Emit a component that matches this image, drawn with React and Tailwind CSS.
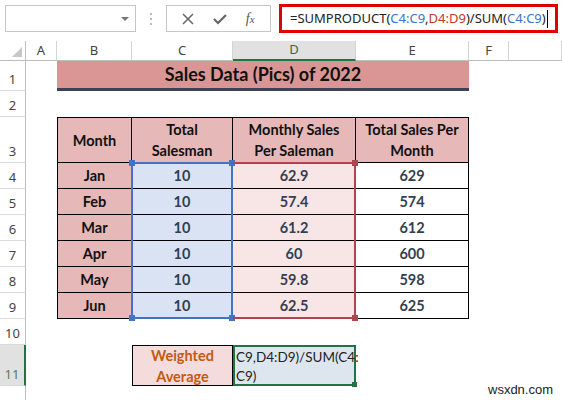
import React from 'react';

const rows = [
  ['Jan', '10', '62.9', '629'],
  ['Feb', '10', '57.4', '574'],
  ['Mar', '10', '61.2', '612'],
  ['Apr', '10', '60', '600'],
  ['May', '10', '59.8', '598'],
  ['Jun', '10', '62.5', '625'],
];

// explicit grid rows for sheet rows 4..9
const rowStart = ['row-start-5', 'row-start-6', 'row-start-7', 'row-start-8', 'row-start-9', 'row-start-10'];

const cellFont = { fontFamily: 'Lato, "Open Sans", sans-serif' };
const uiFont = { fontFamily: '"Noto Sans", sans-serif' };

function RowHead({ n, row, active }) {
  return (
    <div
      className={`col-start-1 ${row} flex items-end justify-center pb-[1px] text-[13px] border-b border-[#dadada] ${
        active ? 'bg-[#e1e1e1] text-[#5a7a5e] border-r-2 border-r-[#217346]' : 'text-[#444] border-r border-r-[#bdbdbd]'
      }`}
      style={uiFont}
    >
      {n}
    </div>
  );
}

function ColHead({ label, active }) {
  return (
    <div
      className={`row-start-1 flex items-center justify-center text-[13px] border-r border-[#d4d4d4] ${
        active ? 'bg-[#e1e1e1] text-[#217346] border-b-2 border-b-[#217346]' : 'text-[#444] border-b border-b-[#bdbdbd]'
      }`}
      style={uiFont}
    >
      {label}
    </div>
  );
}

function Handle({ pos, color }) {
  return <div className={`absolute w-[6px] h-[6px] ${pos} ${color}`} />;
}

export default function App() {
  return (
    <div className="w-[562px] h-[400px] overflow-hidden bg-white relative">
      {/* Formula bar */}
      <div className="h-[41px] flex items-start pt-[5px] pl-[5px]">
        <div className="w-[131px] h-[27px] border border-[#c6c6c6] flex items-center justify-end pr-[6px]">
          <div className="w-0 h-0 border-l-[4px] border-r-[4px] border-t-[4px] border-l-transparent border-r-transparent border-t-[#777]" />
        </div>
        <div className="w-[30px] h-[27px] flex flex-col items-center justify-center gap-[3px]">
          <span className="w-[2px] h-[2px] bg-[#bbb]" />
          <span className="w-[2px] h-[2px] bg-[#bbb]" />
          <span className="w-[2px] h-[2px] bg-[#bbb]" />
        </div>
        <div className="w-[105px] h-[27px] border border-[#c6c6c6] flex items-center justify-around px-[6px]">
          <svg width="12" height="12" viewBox="0 0 12 12">
            <path d="M1 1 L11 11 M11 1 L1 11" stroke="#666" strokeWidth="1.5" />
          </svg>
          <svg width="14" height="12" viewBox="0 0 14 12">
            <path d="M1 6 L5 10 L13 2" stroke="#666" strokeWidth="2.2" fill="none" />
          </svg>
          <span className="italic text-[14px] text-[#555]" style={{ fontFamily: '"Liberation Serif", serif' }}>
            f<span className="text-[11px]">x</span>
          </span>
        </div>
        <div
          className="ml-[8px] w-[279px] h-[29px] -mt-[1px] border-[3px] border-[#e00000] flex items-center pl-[8px] text-[13px] text-[#222] whitespace-nowrap"
          style={uiFont}
        >
          <span>=SUMPRODUCT(</span>
          <span className="text-[#3b73c8]">C4:C9</span>
          <span>,</span>
          <span className="text-[#c0392b]">D4:D9</span>
          <span>)/SUM(</span>
          <span className="text-[#3b73c8]">C4:C9</span>
          <span>)</span>
          <span className="w-[1px] h-[18px] bg-black ml-[1px]" />
        </div>
      </div>

      {/* Sheet grid */}
      <div className="grid grid-cols-[26px_31px_75px_101px_123px_113px_40px_1fr] grid-rows-[20px_30px_26px_46px_26px_26px_26px_26px_26px_26px_26px_41px_20px]">
        {/* corner + column headers */}
        <div className="row-start-1 col-start-1 relative border-r border-r-[#bdbdbd] border-b border-b-[#bdbdbd]">
          <svg className="absolute right-[3px] bottom-[3px]" width="10" height="10" viewBox="0 0 10 10">
            <path d="M10 0 L10 10 L0 10 Z" fill="#c8c8c8" />
          </svg>
        </div>
        <ColHead label="A" />
        <ColHead label="B" />
        <ColHead label="C" />
        <ColHead label="D" active />
        <ColHead label="E" />
        <ColHead label="F" />
        <ColHead label="" />

        {/* row 1 title */}
        <RowHead n="1" row="row-start-2" />
        <div
          className="row-start-2 col-start-3 col-span-4 bg-[#da9694] border-b-[3px] border-[#3d4256] flex items-center justify-center text-[18px] font-bold text-[#111]"
          style={cellFont}
        >
          Sales Data (Pics) of 2022
        </div>

        {/* row 2 */}
        <RowHead n="2" row="row-start-3" />

        {/* row 3 header */}
        <RowHead n="3" row="row-start-4" />
        <div className="row-start-4 col-start-3 bg-[#e6b8b7] border border-black flex items-center justify-center text-center text-[14.5px] font-bold leading-[21px] text-[#111]" style={cellFont}>
          Month
        </div>
        <div className="row-start-4 col-start-4 bg-[#e6b8b7] border-t border-r border-b border-black flex items-center justify-center text-center text-[14.5px] font-bold leading-[21px] text-[#111]" style={cellFont}>
          Total<br />Salesman
        </div>
        <div className="row-start-4 col-start-5 bg-[#e6b8b7] border-t border-r border-b border-black flex items-center justify-center text-center text-[14.5px] font-bold leading-[21px] text-[#111]" style={cellFont}>
          Monthly Sales<br />Per Saleman
        </div>
        <div className="row-start-4 col-start-6 bg-[#e6b8b7] border-t border-r border-b border-black flex items-center justify-center text-center text-[14.5px] font-bold leading-[21px] text-[#111]" style={cellFont}>
          Total Sales Per<br />Month
        </div>

        {/* data rows */}
        {rows.map((r, i) => (
          <React.Fragment key={r[0]}>
            <RowHead n={String(i + 4)} row={rowStart[i]} />
            <div className={`${rowStart[i]} col-start-3 bg-[#e6b8b7] border-l border-r border-b border-black flex items-center justify-center text-[14.5px] font-bold text-[#111]`} style={cellFont}>
              {r[0]}
            </div>
            <div className={`${rowStart[i]} col-start-4 bg-[#d9e3f3] border-r border-b border-black flex items-center justify-center text-[14.5px] font-bold text-[#333f50]`} style={cellFont}>
              {r[1]}
            </div>
            <div className={`${rowStart[i]} col-start-5 bg-[#f8e6e6] border-r border-b border-black flex items-center justify-center text-[14.5px] font-bold text-[#333f50]`} style={cellFont}>
              {r[2]}
            </div>
            <div className={`${rowStart[i]} col-start-6 bg-white border-r border-b border-black flex items-center justify-center text-[14.5px] font-bold text-[#333f50]`} style={cellFont}>
              {r[3]}
            </div>
          </React.Fragment>
        ))}

        {/* reference highlights over C4:C9 and D4:D9 */}
        <div className="col-start-4 row-start-5 row-span-6 relative z-10 border-2 border-[#4472c4] -ml-[1px] -mt-[1px] pointer-events-none">
          <Handle pos="-left-[4px] -top-[4px]" color="bg-[#4472c4]" />
          <Handle pos="-right-[4px] -top-[4px]" color="bg-[#4472c4]" />
          <Handle pos="-left-[4px] -bottom-[4px]" color="bg-[#4472c4]" />
          <Handle pos="-right-[4px] -bottom-[4px]" color="bg-[#4472c4]" />
        </div>
        <div className="col-start-5 row-start-5 row-span-6 relative z-10 border-2 border-[#b0444e] border-l-0 -mt-[1px] pointer-events-none">
          <Handle pos="-right-[4px] -top-[4px]" color="bg-[#b0444e]" />
          <Handle pos="-right-[4px] -bottom-[4px]" color="bg-[#b0444e]" />
        </div>

        {/* row 10 */}
        <RowHead n="10" row="row-start-11" />

        {/* row 11 */}
        <RowHead n="11" row="row-start-12" active />
        <div className="row-start-12 col-start-4 bg-[#f3dcdb] border border-black flex items-center justify-center text-center text-[14.5px] font-bold leading-[21px] text-[#c55a11]" style={cellFont}>
          Weighted<br />Average
        </div>
        <div className="row-start-12 col-start-5 relative bg-[#dde6ef] border-2 border-[#217346] pl-[1px] pt-[1px] text-[13.5px] leading-[19px] text-[#222] whitespace-nowrap" style={cellFont}>
          C9,D4:D9)/SUM(C4:<br />C9)
          <div className="absolute -right-[3px] -bottom-[3px] w-[5px] h-[5px] bg-[#217346]" />
        </div>

        {/* row 12 */}
        <div className="col-start-1 row-start-13 border-r border-r-[#bdbdbd]" />
      </div>

      <div className="absolute left-[488px] top-[380px] text-[13px] text-[#222]" style={{ fontFamily: '"Liberation Sans", sans-serif' }}>
        wsxdn.com
      </div>
    </div>
  );
}
